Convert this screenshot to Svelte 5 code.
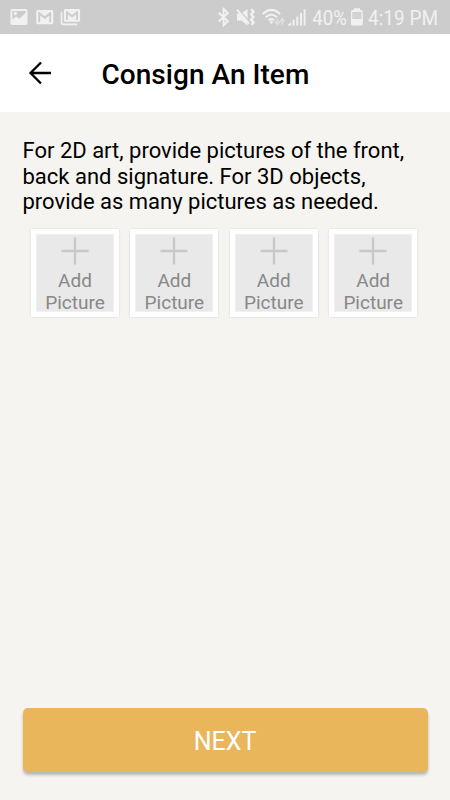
<script>
  const slots = [1, 2, 3, 4];
</script>

<div class="screen">
  <div class="status">
    <svg class="left" width="90" height="34" viewBox="0 0 90 34">
      <path fill-rule="evenodd" d="M12.500 9h13a2 2 0 0 1 2 2v12a2 2 0 0 1-2 2h-13a2 2 0 0 1-2-2V11a2 2 0 0 1 2-2zM12.300 11v8.800l3.700-3.300 3.500 2.200 6-5.700V11zM13.700 13.500a1.700 1.700 0 1 0 3.400 0a1.700 1.700 0 1 0-3.400 0z" />
      <path fill-rule="evenodd" d="M38 10h13.500a1.800 1.800 0 0 1 1.800 1.800v10.600a1.800 1.800 0 0 1-1.800 1.800H38a1.800 1.800 0 0 1-1.800-1.800V11.800a1.800 1.800 0 0 1 1.800-1.800zM38.300 12v10.200h1.900v-6.600l4.500 3.300 4.500-3.300v6.600h1.900V12h-1l-5.400 4.200-5.400-4.200z" />
      <path fill-rule="evenodd" d="M65.500 9h13a1.600 1.600 0 0 1 1.600 1.600v9.600a1.600 1.600 0 0 1-1.600 1.600h-13a1.600 1.600 0 0 1-1.600-1.600v-9.600A1.600 1.600 0 0 1 65.500 9zM66 11v9h1.800v-5.700l4.200 3.300 4.200-3.300V20H78v-9h-.9L72 15 66.900 11z" />
      <path d="M61.500 12.300v10.400a1.600 1.600 0 0 0 1.600 1.600H77" fill="none" stroke="#f1f1f1" stroke-width="1.700" />
    </svg>
    <svg class="right" width="240" height="34" viewBox="210 0 240 34">
      <path d="M218.800 12.800l9 8.400-4.200 4V9l4.200 3.900-9 8.500" fill="none" stroke="#f1f1f1" stroke-width="2" />
      <path d="M237 13.500h4.500l6-4.500v16.500l-6-5H237z" />
      <path d="M238.200 9l11.500 13" stroke="#ccc" stroke-width="1.500" />
      <path d="M237 9.700l12 14" stroke="#f1f1f1" stroke-width="1.800" />
      <path d="M251.200 9l2.200 2.700-2.200 2.700 2.200 2.700-2.200 2.700 2.200 2.700-1.800 2.200" fill="none" stroke="#f1f1f1" stroke-width="2.400" />
      <path d="M262.700 14q8.700-8.300 17.400 0M265.700 17.300q5.700-5 11.400 0M268.600 20.300q2.800-2.300 5.600 0" fill="none" stroke="#f1f1f1" stroke-width="2" />
      <path d="M269.500 22l1.900-1.200 1.900 1.200-1.900 2.200z" />
      <path d="M277.500 18.500v6M275 21.500l2.500 2.700 2.500-2.700M282.300 24.800v-6M279.800 21.500l2.500-2.700 2.500 2.700" fill="none" stroke="#e0e0e0" stroke-width="1.700" />
      <path d="M288 25.500v-.8l3-2.500v3.300zM292.500 25.500v-6h2v6zM296.300 25.500v-9h2v9zM300 25.500v-12.500h2v12.500zM303.600 25.500V9.200h1.900v16.300z" />
      <text x="312.300" y="25" textLength="34.500" lengthAdjust="spacingAndGlyphs">40%</text>
      <path fill-rule="evenodd" d="M354 8.300h6V10h1.300a1.500 1.500 0 0 1 1.500 1.500V24a1.500 1.500 0 0 1-1.500 1.500h-8.800A1.500 1.500 0 0 1 351 24V11.500a1.500 1.500 0 0 1 1.500-1.500H354zM352.500 12v7h8.800v-7z" />
      <path d="M352.500 12h8.800v7h-8.800z" fill="#d4d4d4" />
      <text x="368" y="25" textLength="70" lengthAdjust="spacingAndGlyphs">4:19 PM</text>
    </svg>
  </div>

  <header>
    <svg width="24" height="24" viewBox="0 0 24 24">
      <path d="M23 12H2.500M13 1.500L2.500 12 13 22.500" fill="none" stroke="#000" stroke-width="2.300" />
    </svg>
    <h1>Consign An Item</h1>
  </header>

  <main>
    <p>For 2D art, provide pictures of the front,<br />back and signature. For 3D objects,<br />provide as many pictures as needed.</p>
    <div class="tiles">
      {#each slots as slot (slot)}
        <div class="tile">
          <div class="inner">
            <svg width="28" height="28" viewBox="0 0 28 28">
              <path d="M14 .5v27M.5 14h27" stroke="#c8c8c8" stroke-width="2.300" />
            </svg>
            <span>Add<br />Picture</span>
          </div>
        </div>
      {/each}
    </div>
    <button>NEXT</button>
  </main>
</div>

<style>
  :global(body) {
    margin: 0;
  }
  .screen {
    width: 450px;
    height: 800px;
    display: flex;
    flex-direction: column;
    background: #f5f4f0;
    font-family: Roboto, sans-serif;
    color: #000;
    overflow: hidden;
  }
  .status {
    height: 34px;
    flex: none;
    display: flex;
    justify-content: space-between;
    background: #ccc;
  }
  .status svg {
    fill: #f1f1f1;
  }
  .status text {
    font-size: 21px;
  }
  header {
    height: 78px;
    flex: none;
    display: flex;
    align-items: center;
    background: #fff;
    padding-left: 27.5px;
  }
  h1 {
    margin: 3px 0 0 50px;
    font-size: 28px;
    font-weight: 500;
    line-height: 34px;
    letter-spacing: 0.04px;
    white-space: nowrap;
  }
  main {
    flex: 1;
    display: flex;
    flex-direction: column;
    padding: 26px 22.5px 28px;
  }
  p {
    margin: 0;
    font-size: 22px;
    line-height: 25.6px;
    white-space: nowrap;
  }
  .tiles {
    display: flex;
    gap: 11.4px;
    margin: 14.2px 0 0 8.5px;
  }
  .tile {
    width: 78px;
    height: 78px;
    padding: 5px;
    background: #fff;
    box-shadow: 0 0 2px rgba(0, 0, 0, 0.14);
  }
  .inner {
    height: 78px;
    box-sizing: border-box;
    border: 1px solid #f0f0f0;
    background: #e9e9e9;
    display: flex;
    flex-direction: column;
    align-items: center;
  }
  .inner svg {
    flex: none;
    margin-top: 2px;
  }
  .inner span {
    margin-top: 5px;
    font-size: 19px;
    line-height: 22px;
    text-align: center;
    color: #888;
  }
  button {
    margin-top: auto;
    height: 64px;
    flex: none;
    border: 0;
    padding: 3px 0 0;
    border-radius: 5px;
    background: #eab65b;
    box-shadow: 0 3px 3px rgba(0, 0, 0, 0.25);
    color: #fff;
    font: 400 25px Roboto, sans-serif;
  }
</style>
